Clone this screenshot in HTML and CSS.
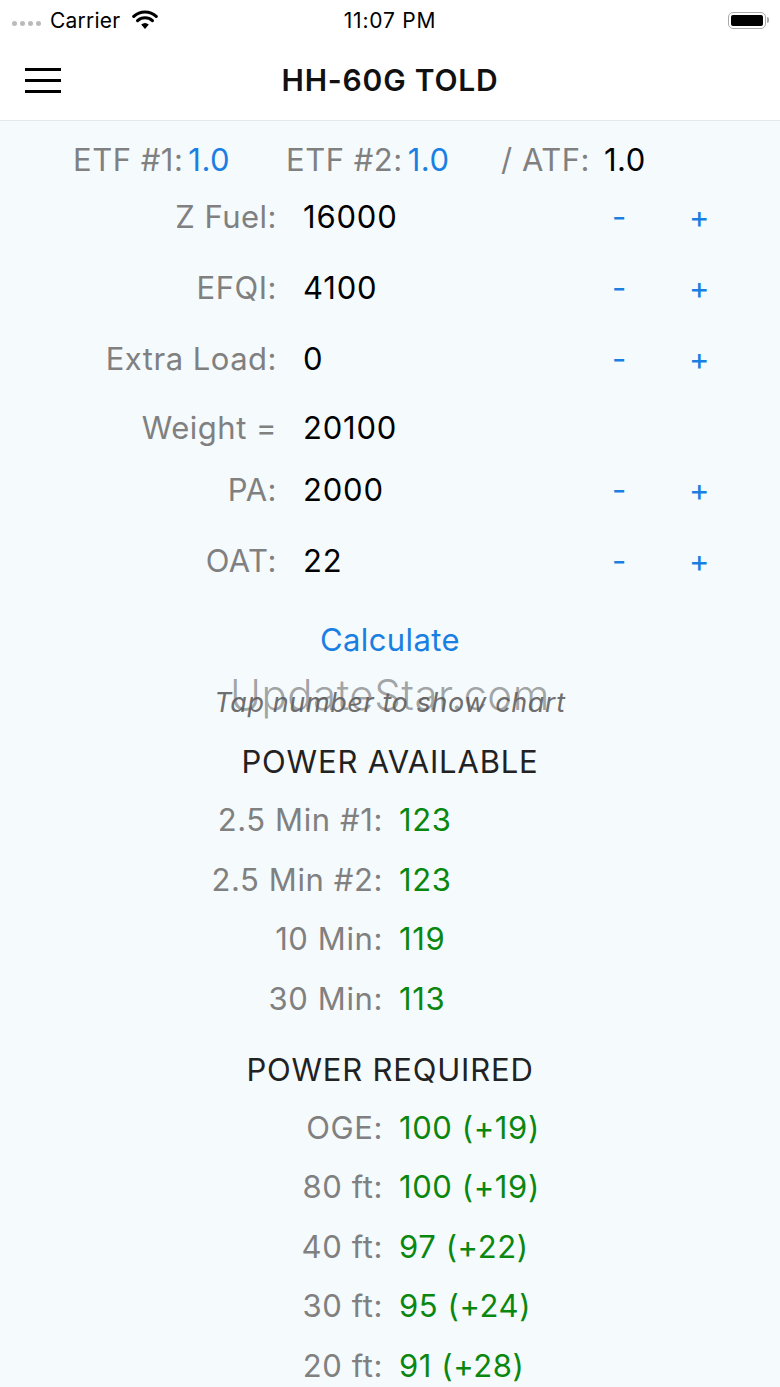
FILE: index.html
```html
<!doctype html>
<html lang=en>
<head>
	<meta charset=utf-8>
	<title>HH-60G TOLD</title>
	<link rel="stylesheet" href="styles.css">
</head>
<body>
	<div class="statusbar">
		<div class="sb-left">
			<span class="dots"><i></i><i></i><i></i><i></i></span>
			<span class="carrier">Carrier</span>
			<svg class="wifi" width="26" height="20" viewBox="0 0 26 20">
				<path d="M13 19 L9.2 14.6 A6 6 0 0 1 16.8 14.6 Z" fill="#000"/>
				<path d="M5.6 10.6 A11 11 0 0 1 20.4 10.6" stroke="#000" stroke-width="3.2" fill="none" stroke-linecap="round"/>
				<path d="M1.8 6.4 A16.5 16.5 0 0 1 24.2 6.4" stroke="#000" stroke-width="3.2" fill="none" stroke-linecap="round"/>
			</svg>
		</div>
		<div class="sb-time">11:07 PM</div>
		<div class="sb-right">
			<span class="battery"><span class="level"></span></span><span class="nub"></span>
		</div>
	</div>

	<div class="navbar">
		<div class="burger"><i></i><i></i><i></i></div>
		<div class="title">HH-60G TOLD</div>
	</div>

	<div class="content">
		<div class="etf">
			<span class="grp g1"><span class="lbl">ETF #1:</span><span class="blue">1.0</span></span>
			<span class="grp g2"><span class="lbl">ETF #2:</span><span class="blue">1.0</span></span>
			<span class="grp g3"><span class="lbl">/ ATF:</span><span class="val">1.0</span></span>
		</div>

		<div class="inputs">
			<div class="row r-zfuel"><span class="lbl">Z Fuel:</span><span class="val">16000</span><span class="btn">-</span><span class="btn">+</span></div>
			<div class="row"><span class="lbl">EFQI:</span><span class="val">4100</span><span class="btn">-</span><span class="btn">+</span></div>
			<div class="row"><span class="lbl">Extra Load:</span><span class="val">0</span><span class="btn">-</span><span class="btn">+</span></div>
			<div class="row r-weight"><span class="lbl">Weight =</span><span class="val">20100</span></div>
			<div class="row r-pa"><span class="lbl">PA:</span><span class="val">2000</span><span class="btn">-</span><span class="btn">+</span></div>
			<div class="row"><span class="lbl">OAT:</span><span class="val">22</span><span class="btn">-</span><span class="btn">+</span></div>
		</div>

		<div class="calc">Calculate</div>
		<div class="hint">Tap number to show chart</div>

		<div class="section">POWER AVAILABLE</div>
		<div class="results">
			<span class="lbl">2.5 Min #1:</span><span class="green">123</span>
			<span class="lbl">2.5 Min #2:</span><span class="green">123</span>
			<span class="lbl">10 Min:</span><span class="green">119</span>
			<span class="lbl">30 Min:</span><span class="green">113</span>
		</div>

		<div class="section s2">POWER REQUIRED</div>
		<div class="results">
			<span class="lbl">OGE:</span><span class="green">100 (+19)</span>
			<span class="lbl">80 ft:</span><span class="green">100 (+19)</span>
			<span class="lbl">40 ft:</span><span class="green">97 (+22)</span>
			<span class="lbl">30 ft:</span><span class="green">95 (+24)</span>
			<span class="lbl">20 ft:</span><span class="green">91 (+28)</span>
		</div>

		<div class="watermark">UpdateStar.com</div>
	</div>
</body>
</html>
```

FILE: styles.css
```css
body { margin:0; font-family:Inter, "Noto Sans", sans-serif; color:#000; background:#f5fafd; }

/* status bar */
.statusbar { height:40px; background:#fff; display:flex; align-items:center; position:relative; }
.sb-left { display:flex; align-items:center; padding-left:12px; }
.dots { display:flex; gap:3px; margin-right:9px; padding-top:6px; }
.dots i { width:5px; height:5px; border-radius:50%; background:#bbb; display:block; }
.carrier { font-size:21px; letter-spacing:0.2px; }
.wifi { margin-left:12px; }
.sb-time { position:absolute; left:0; right:0; text-align:center; font-size:21px; letter-spacing:0.8px; }
.sb-right { margin-left:auto; margin-right:11px; display:flex; align-items:center; }
.battery { width:38px; height:17px; border:1.5px solid #aaa; border-radius:5px; padding:2px; box-sizing:border-box; display:flex; }
.battery .level { flex:1; background:#000; border-radius:2px; }
.nub { width:2px; height:6px; background:#aaa; border-radius:0 2px 2px 0; margin-left:1px; }

/* nav */
.navbar { height:80px; background:#fff; border-bottom:1px solid #e3e8eb; display:flex; align-items:center; position:relative; }
.burger { margin-left:25px; display:flex; flex-direction:column; gap:8px; }
.burger i { display:block; width:36px; height:3px; background:#000; }
.title { position:absolute; left:0; right:0; text-align:center; font-size:30px; font-weight:600; letter-spacing:0.8px; color:#111; pointer-events:none; }

.content { position:relative; padding-bottom:40px; }

.lbl { color:#808080; }
.blue, .btn, .calc { color:#1a7fe3; }
.green { color:#0a870f; }

/* ETF line */
.etf { display:flex; padding:19px 0 0 73px; font-size:31px; line-height:40px; letter-spacing:0.5px; }
.grp { display:flex; }
.g1 { width:213px; gap:5px; }
.g2 { width:215px; gap:5px; }
.g3 { gap:14px; }

/* input rows */
.inputs { display:flex; flex-direction:column; gap:31px; margin-top:16px; }
.row { display:flex; align-items:center; height:40px; font-size:31px; letter-spacing:0.5px; }
.row .lbl { width:277px; text-align:right; }
.row .val { margin-left:26px; width:309px; letter-spacing:0.8px; }
.row .btn { width:77px; }
.r-weight { margin-top:-2px; }
.r-pa { margin-top:-9px; }

.calc { text-align:center; font-size:31px; margin-top:40px; line-height:40px; letter-spacing:0.4px; }
.hint { text-align:center; font-size:27px; font-style:italic; color:#6e6e6e; margin-top:26px; line-height:34px; letter-spacing:0.6px; }

.section { text-align:center; font-size:31px; color:#222; line-height:40px; margin-top:22px; letter-spacing:0.8px; }
.s2 { margin-top:31px; }

.results { display:grid; grid-template-columns:383px 1fr; column-gap:16px; row-gap:19.5px; margin-top:18px; font-size:31px; line-height:40px; letter-spacing:0.6px; }
.results .lbl { text-align:right; }

.watermark { position:absolute; top:548px; left:0; right:0; text-align:center; font-size:42px; font-weight:300; color:rgba(90,90,90,0.55); letter-spacing:0.5px; pointer-events:none; }
```
